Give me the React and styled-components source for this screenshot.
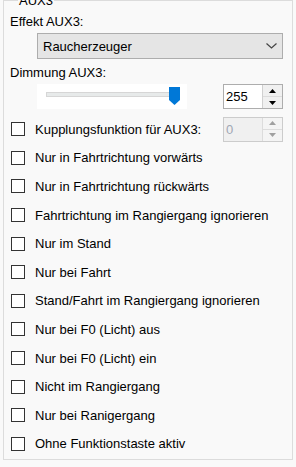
import styled, { createGlobalStyle } from "styled-components";

const GlobalStyle = createGlobalStyle`
  html, body {
    margin: 0;
    padding: 0;
    background: #f9f9f9;
  }
  body {
    font-family: "Liberation Sans", Arial, sans-serif;
    font-size: 13px;
    color: #000;
  }
`;

const Page = styled.div`
  width: 296px;
  height: 467px;
  overflow: hidden;
`;

const Group = styled.fieldset`
  box-sizing: border-box;
  width: 290px;
  height: 467px;
  margin: -7px 0 0 3px;
  padding: 6px 9px 2px 6px;
  border: 1px solid #dcdcdc;
  min-width: 0;
`;

const Legend = styled.legend`
  margin-left: 8px;
  padding: 0 1px;
  line-height: 15px;
`;

const Label = styled.div`
  line-height: 15px;
  margin-top: ${(p) => p.$top || 0}px;
`;

const Select = styled.div`
  box-sizing: border-box;
  height: 26px;
  margin: 4px 0 0 27px;
  padding: 0 5px 0 5px;
  display: flex;
  align-items: center;
  justify-content: space-between;
  background: #e5e5e5;
  border: 1px solid #adadad;
`;

const SliderRow = styled.div`
  margin: 4px 0 0 27px;
  display: flex;
  justify-content: space-between;
  align-items: flex-start;
`;

const Slider = styled.div`
  position: relative;
  width: 150px;
  height: 25px;
  background: #fff;
`;

const Track = styled.div`
  position: absolute;
  left: 9px;
  right: 10px;
  top: 8px;
  height: 3px;
  background: #e7eaea;
  border: 1px solid #d6d6d6;
`;

const Thumb = styled.svg`
  position: absolute;
  left: 132px;
  top: 3px;
`;

const Spin = styled.div`
  box-sizing: border-box;
  width: 60px;
  height: 25px;
  display: flex;
  border: 1px solid ${(p) => (p.$disabled ? "#cccccc" : "#adadad")};
  background: ${(p) => (p.$disabled ? "#f0f0f0" : "#fff")};
`;

const SpinValue = styled.div`
  flex: 1;
  padding-left: 2px;
  line-height: 23px;
  color: ${(p) => (p.$disabled ? "#a0a7b4" : "#000")};
`;

const SpinButtons = styled.div`
  width: 19px;
  display: flex;
  flex-direction: column;
  border-left: 1px solid ${(p) => (p.$disabled ? "#dcdcdc" : "#d0d0d0")};
`;

const SpinButton = styled.div`
  flex: 1;
  display: flex;
  align-items: center;
  justify-content: center;
  background: ${(p) => (p.$disabled ? "#f4f4f4" : "#f0f0f0")};
  & + & {
    border-top: 1px solid ${(p) => (p.$disabled ? "#dcdcdc" : "#c8c8c8")};
  }
`;

const Rows = styled.div`
  margin-top: 6px;
  display: flex;
  flex-direction: column;
`;

const Row = styled.div`
  height: 28.6px;
  display: flex;
  align-items: center;
`;

const Box = styled.div`
  box-sizing: border-box;
  width: 14px;
  height: 14px;
  margin-left: 1px;
  border: 1px solid #333;
  background: #fff;
  flex-shrink: 0;
`;

const RowText = styled.span`
  margin-left: 10px;
  flex: 1;
  white-space: nowrap;
`;

const Arrow = ({ up, color }) => (
  <svg width="7" height="4" viewBox="0 0 7 4">
    <polygon points={up ? "0,4 7,4 3.5,0" : "0,0 7,0 3.5,4"} fill={color} />
  </svg>
);

const NumericUpDown = ({ value, disabled }) => (
  <Spin $disabled={disabled}>
    <SpinValue $disabled={disabled}>{value}</SpinValue>
    <SpinButtons $disabled={disabled}>
      <SpinButton $disabled={disabled}>
        <Arrow up color={disabled ? "#a0a0a0" : "#000"} />
      </SpinButton>
      <SpinButton $disabled={disabled}>
        <Arrow color={disabled ? "#a0a0a0" : "#000"} />
      </SpinButton>
    </SpinButtons>
  </Spin>
);

const options = [
  "Nur in Fahrtrichtung vorwärts",
  "Nur in Fahrtrichtung rückwärts",
  "Fahrtrichtung im Rangiergang ignorieren",
  "Nur im Stand",
  "Nur bei Fahrt",
  "Stand/Fahrt im Rangiergang ignorieren",
  "Nur bei F0 (Licht) aus",
  "Nur bei F0 (Licht) ein",
  "Nicht im Rangiergang",
  "Nur bei Ranigergang",
  "Ohne Funktionstaste aktiv",
];

export default function App() {
  return (
    <Page>
      <GlobalStyle />
      <Group>
        <Legend>AUX3</Legend>
        <Label>Effekt AUX3:</Label>
        <Select>
          <span>Raucherzeuger</span>
          <svg width="11" height="6" viewBox="0 0 11 6">
            <polyline points="0.5,0.5 5.5,5 10.5,0.5" fill="none" stroke="#444" strokeWidth="1.2" />
          </svg>
        </Select>
        <Label $top={6}>Dimmung AUX3:</Label>
        <SliderRow>
          <Slider>
            <Track />
            <Thumb width="11" height="18" viewBox="0 0 11 18">
              <polygon points="0,0 11,0 11,13 5.5,18 0,13" fill="#0078d7" />
            </Thumb>
          </Slider>
          <NumericUpDown value="255" />
        </SliderRow>
        <Rows>
          <Row>
            <Box />
            <RowText>Kupplungsfunktion für AUX3:</RowText>
            <NumericUpDown value="0" disabled />
          </Row>
          {options.map((o) => (
            <Row key={o}>
              <Box />
              <RowText>{o}</RowText>
            </Row>
          ))}
        </Rows>
      </Group>
    </Page>
  );
}
